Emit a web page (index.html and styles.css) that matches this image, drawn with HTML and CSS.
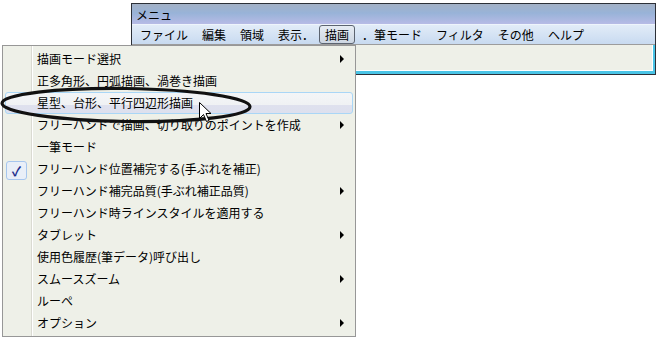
FILE: index.html
```html
<!DOCTYPE html>
<html lang="ja">
<head>
    <meta charset="UTF-8">
    <title>メニュ</title>
    <link rel="stylesheet" href="styles.css">
</head>
<body>
    <div class="screen">
        <!-- Application window -->
        <div class="window">
            <div class="titlebar">メニュ</div>
            <div class="menubar">
                <span class="menu-item">ファイル</span>
                <span class="menu-item">編集</span>
                <span class="menu-item">領域</span>
                <span class="menu-item menu-item-short">表示．</span>
                <span class="menu-item is-open">描画</span>
                <span class="menu-item">．筆モード</span>
                <span class="menu-item">フィルタ</span>
                <span class="menu-item">その他</span>
                <span class="menu-item">ヘルプ</span>
            </div>
            <div class="frame">
                <div class="client"></div>
            </div>
        </div>

        <!-- Drop-down menu of 描画 -->
        <ul class="popup">
            <li class="row has-sub">描画モード選択</li>
            <li class="row">正多角形、円弧描画、渦巻き描画</li>
            <li class="row is-hot">星型、台形、平行四辺形描画</li>
            <li class="row has-sub">フリーハンドで描画、切り取りのポイントを作成</li>
            <li class="row">一筆モード</li>
            <li class="row"><span class="check">✓</span>フリーハンド位置補完する(手ぶれを補正)</li>
            <li class="row has-sub">フリーハンド補完品質(手ぶれ補正品質)</li>
            <li class="row">フリーハンド時ラインスタイルを適用する</li>
            <li class="row has-sub">タブレット</li>
            <li class="row">使用色履歴(筆データ)呼び出し</li>
            <li class="row has-sub">スムースズーム</li>
            <li class="row">ルーペ</li>
            <li class="row has-sub">オプション</li>
        </ul>

        <!-- hand drawn mark round the hot item -->
        <svg class="mark" width="262" height="44" viewBox="0 0 262 44">
            <ellipse cx="126" cy="21" rx="124" ry="16.5" transform="rotate(0.8 126 21)" fill="none" stroke="#111" stroke-width="3.2"/>
        </svg>

        <svg class="cursor" width="13" height="21" viewBox="0 0 13 21">
            <path d="M0.5 0.5 L0.5 16.5 L4.5 12.5 L7.5 19.5 L10 18.5 L7 11.5 L12 11.5 Z" fill="#fff" stroke="#000" stroke-width="1" stroke-linejoin="miter"/>
        </svg>
    </div>
</body>
</html>
```

FILE: styles.css
```css
* {
    margin: 0;
    padding: 0;
    box-sizing: border-box;
}

body {
    background-color: #fff;
    font-family: "Noto Sans CJK JP", "Liberation Sans", sans-serif;
    font-size: 12px;
    color: #000;
}

.screen {
    position: relative;
    width: 659px;
    height: 344px;
    overflow: hidden;
}

/* Window */
.window {
    margin: 3px 0 0 131px;
    width: 525px;
    border: 1px solid #2c3038;
    background-color: #eef0e8;
}

.titlebar {
    height: 21px;
    line-height: 21px;
    padding-left: 4px;
    background: linear-gradient(#a3b1c6, #98b3d8 45%, #b7bbe6);
    border-bottom: 1px solid #eef4fc;
}

.menubar {
    display: flex;
    align-items: center;
    height: 20px;
    padding-left: 1px;
    background: linear-gradient(#e2ecf8, #c8daf0);
    border-bottom: 1px solid #9c9c9c;
}

.menu-item {
    padding: 0 7px;
    line-height: 18px;
    white-space: nowrap;
}

.menu-item-short {
    padding-right: 5px;
}

.menu-item.is-open {
    padding: 0 5px;
    height: 19px;
    border: 1px solid #5c6470;
    border-radius: 3px;
    background: linear-gradient(#e6ecf3, #cdd6e2);
}

.frame {
    border-right: 2px solid #4ac4e6;
    border-bottom: 3px solid #4ac4e6;
}

.client {
    height: 26px;
    background-color: #eef0e8;
    border-right: 1px solid #fff;
    border-bottom: 1px solid #fff;
}

/* Popup menu */
.popup {
    position: absolute;
    left: 2px;
    top: 45px;
    width: 354px;
    padding: 2px;
    list-style: none;
    border: 1px solid #979797;
    background-color: #eef0e8;
    background-image: linear-gradient(to right, transparent 28px, #dadad2 28px, #dadad2 29px, #fff 29px, #fff 30px, transparent 30px);
}

.row {
    position: relative;
    height: 22px;
    line-height: 20px;
    padding-left: 31px;
    border: 1px solid transparent;
    white-space: nowrap;
}

.row.is-hot {
    border-color: #a9d6f6;
    border-radius: 3px;
    background: linear-gradient(#f3f5f7 0%, #f0f2f4 58%, #dfe1ee 60%, #dde0ee 100%);
}

.has-sub::after {
    content: "";
    position: absolute;
    right: 8px;
    top: 6px;
    border-left: 4px solid #000;
    border-top: 4px solid transparent;
    border-bottom: 4px solid transparent;
}

.check {
    position: absolute;
    left: 0;
    top: 2px;
    width: 21px;
    height: 19px;
    line-height: 17px;
    text-align: center;
    font-size: 13px;
    font-weight: bold;
    color: #1c2c8c;
    border: 1px solid #a6c6ee;
    border-radius: 3px;
    background-color: #e9eff8;
}

/* Overlays */
.mark {
    position: absolute;
    left: 0;
    top: 84px;
}

.cursor {
    position: absolute;
    left: 199px;
    top: 102px;
}
```
